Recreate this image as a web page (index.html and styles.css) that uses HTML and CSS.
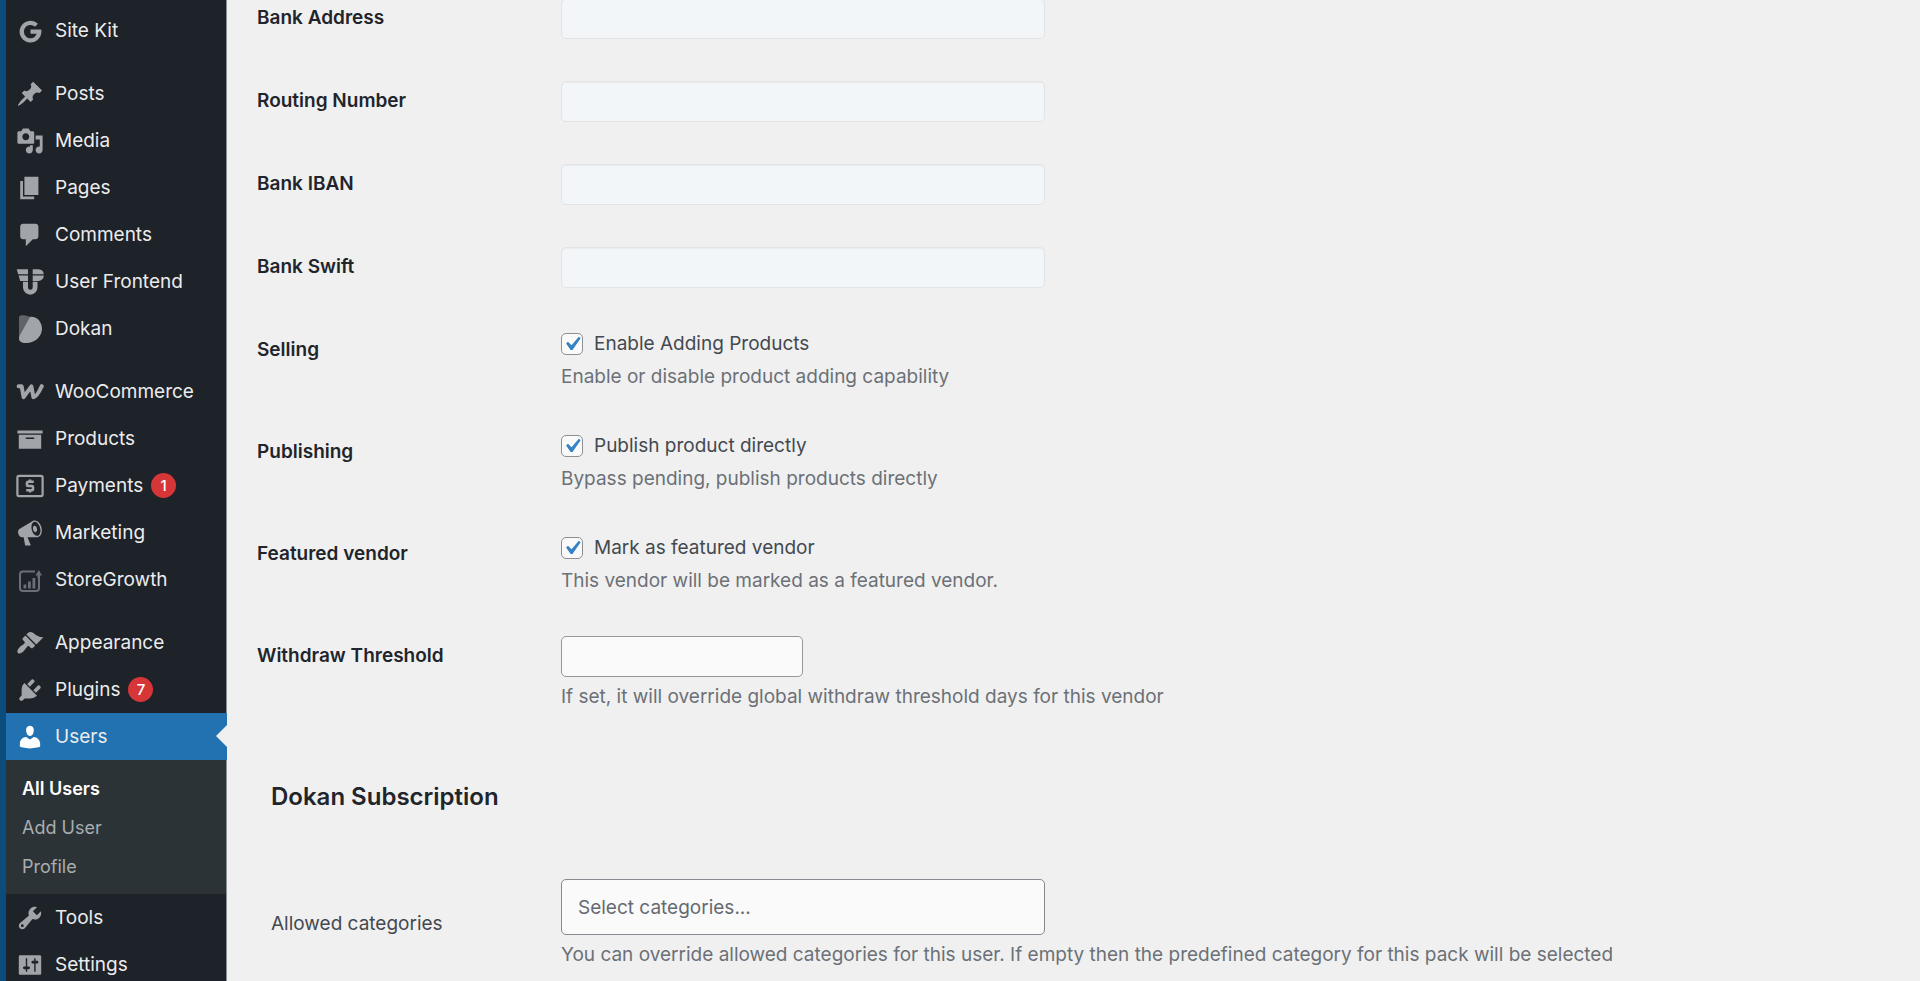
FILE: index.html
```html
<!DOCTYPE html>
<html lang="en">
<head>
<meta charset="utf-8">
<title>Edit User</title>
<link rel="stylesheet" href="styles.css">
</head>
<body>
<div class="layout">
  <nav class="sidebar" aria-label="Main menu">
    <ul class="menu">
      <li><a class="item" href="#"><svg class="icon" viewBox="0 0 28 28"><path d="M20.500 8.200A8.800 8.800 0 1 0 23.300 14.600H14.500" fill="none" stroke="currentColor" stroke-width="4.200"/></svg>Site Kit</a></li>
    </ul>
    <ul class="menu">
      <li><a class="item" href="#"><svg class="icon" viewBox="0 0 20 20"><path d="M10.44 3.02l1.82-1.82 6.36 6.35-1.83 1.82c-1.05-.68-2.48-.57-3.41.36l-.75.75c-.92.93-1.04 2.35-.35 3.41l-1.83 1.82-2.41-2.41-2.8 2.79c-.42.42-3.38 2.71-3.8 2.29s1.86-3.39 2.28-3.81l2.79-2.79L4.1 9.36l1.83-1.82c1.05.69 2.48.57 3.4-.36l.75-.75c.93-.92 1.05-2.35.36-3.41z"/></svg>Posts</a></li>
      <li><a class="item" href="#"><svg class="icon" viewBox="0 0 20 20"><path d="M13 11V4c0-.55-.45-1-1-1h-1.67L9 1H5L3.67 3H2c-.55 0-1 .45-1 1v7c0 .55.45 1 1 1h10c.55 0 1-.45 1-1zM7 4.5c1.38 0 2.5 1.12 2.5 2.5S8.38 9.5 7 9.5 4.5 8.38 4.5 7 5.62 4.5 7 4.5zM14 6h5v10.5c0 1.38-1.12 2.5-2.5 2.5S14 17.88 14 16.5s1.12-2.5 2.5-2.5c.17 0 .34.02.5.05V9h-3V6zm-4 8.05V13h2v3.5c0 1.38-1.12 2.5-2.5 2.5S7 17.88 7 16.5 8.12 14 9.5 14c.17 0 .34.02.5.05z"/></svg>Media</a></li>
      <li><a class="item" href="#"><svg class="icon" viewBox="0 0 20 20"><path d="M6 15V2h10v13H6zm-1 1h8v2H3V5h2v11z"/></svg>Pages</a></li>
      <li><a class="item" href="#"><svg class="icon" viewBox="0 0 20 20"><path d="M5 2h9c1.1 0 2 .9 2 2v7c0 1.1-.9 2-2 2h-2l-5 5v-5H5c-1.1 0-2-.9-2-2V4c0-1.1.9-2 2-2z"/></svg>Comments</a></li>
      <li><a class="item" href="#"><svg class="icon" viewBox="0 0 28 28"><path d="M.7 1.3H12V6.200H2.200zM2.600 7.400H12V13H4.200zM7 13.800H12V19.500a2.300 2.300 0 0 0 4.700 0V13.800h4.800V19.500a7.200 7.200 0 0 1-14.500 0zM16.700 1.300H22.500a5.600 5.600 0 0 1 5.300 4.900H16.700zM16.700 7.400H27.800a5.600 5.600 0 0 1-5.300 5.600H16.700z"/></svg>User Frontend</a></li>
      <li><a class="item" href="#"><svg class="icon" viewBox="0 0 28 28"><path opacity=".5" d="M3 23V2C2.500-.2 9.500-.6 14 2L3 23z"/><path d="M14 1.800C21 1 26 7 26 13.600C26 22 18.500 28.500 9.500 28C5.500 27.900 3 26.500 3 23.500C3 22 3.600 20.700 4.300 19.500z"/></svg>Dokan</a></li>
    </ul>
    <ul class="menu">
      <li><a class="item" href="#"><svg class="icon" viewBox="0 0 28 28"><path d="M2.600 8.200H5.600L7.600 19.200L15.400 8.400L17.400 19.200Q20.500 19.500 25.800 8.200" fill="none" stroke="currentColor" stroke-width="4" stroke-linecap="round" stroke-linejoin="round"/></svg>WooCommerce</a></li>
      <li><a class="item" href="#"><svg class="icon" viewBox="0 0 20 20"><path d="M19 4v2H1V4h18zM2 7h16v10H2V7zm11 3V9H7v1h6z"/></svg>Products</a></li>
      <li><a class="item" href="#"><svg class="icon" viewBox="0 0 28 28"><rect x="1.400" y="3.900" width="25.200" height="20.200" rx="1.500" fill="none" stroke="currentColor" stroke-width="2.200"/><path d="M17.800 9.800H12.200A1.200 1.200 0 0 0 11 11V12.800A1.200 1.200 0 0 0 12.200 14H15.800A1.200 1.200 0 0 1 17 15.200V17A1.200 1.200 0 0 1 15.800 18.200H10.200M14 7.500V10M14 18V20.500" fill="none" stroke="currentColor" stroke-width="2.600"/></svg>Payments<span class="badge">1</span></a></li>
      <li><a class="item" href="#"><svg class="icon" viewBox="0 0 20 20"><path d="M18.150 5.940c.46 1.620.38 3.220-.02 4.480-.42 1.280-1.260 2.180-2.300 2.480-.16.06-.26.06-.4.06-.06.02-.12.02-.18.02-.06.02-.14.02-.22.02h-6.800l2.220 5.500c.02.14-.06.26-.14.34-.08.1-.24.16-.34.16H6.950c-.1 0-.26-.06-.34-.16-.08-.08-.16-.2-.14-.34l-1-5.500H4.250l-.02-.02c-.5.06-1.080-.18-1.540-.62s-.88-1.080-1.060-1.880c-.24-.8-.2-1.560-.02-2.200.18-.62.58-1.080 1.060-1.300l.02-.02 9-5.400c.1-.06.18-.1.24-.16.06-.04.14-.08.24-.12.16-.08.28-.12.5-.18 1.040-.3 2.240.1 3.220.98s1.840 2.240 2.260 3.860zm-2.580 5.980h-.02c.4-.1.74-.34 1.040-.7.58-.7.86-1.760.86-3.040 0-.64-.1-1.300-.28-1.980-.34-1.360-1.020-2.500-1.780-3.240s-1.680-1.100-2.460-.88c-.82.22-1.400.96-1.700 2-.32 1.040-.28 2.360.06 3.720.38 1.360 1 2.500 1.800 3.240.78.74 1.620 1.100 2.480.88zm-2.540-7.080c.22-.04.42-.02.62.04.38.16.76.48 1.020 1s.42 1.200.42 1.780c0 .3-.04.56-.12.8-.18.48-.44.84-.86.94-.34.1-.8-.06-1.140-.4s-.64-.86-.78-1.500c-.18-.62-.12-1.240.02-1.720s.48-.84.82-.94z"/></svg>Marketing</a></li>
      <li><a class="item" href="#"><svg class="icon icon-dim" viewBox="0 0 28 28"><path d="M19 5.500H7A3 3 0 0 0 4 8.500V22A3 3 0 0 0 7 25H20A3 3 0 0 0 23 22V12" fill="none" stroke="currentColor" stroke-width="2"/><path d="M7.500 18.500h2.800v4H7.500zM12 15.500h2.800v7H12zM16.500 12h2.800v10.500h-2.800zM21.500 12V9.500H19.500L22.800 4L26 9.500H24V12z"/></svg>StoreGrowth</a></li>
    </ul>
    <ul class="menu">
      <li><a class="item" href="#"><svg class="icon" viewBox="0 0 20 20"><path d="M14.480 11.060L7.410 3.990l1.500-1.500c.5-.56 2.300-.47 3.510.32 1.210.8 1.430 1.280 2.910 2.100 1.180.64 2.450 1.260 4.450.85zm-.71.71L6.700 4.700 4.930 6.470c-.39.39-.39 1.020 0 1.410l1.060 1.060c.39.39.39 1.030 0 1.420-.6.6-1.430 1.110-2.210 1.690-.35.26-.7.53-1.010.84C1.430 14.230.4 16.080 1.400 17.070c.99 1 2.840-.03 4.180-1.360.31-.31.58-.66.85-1.020.57-.78 1.080-1.610 1.690-2.210.39-.39 1.020-.39 1.410 0l1.060 1.060c.39.39 1.020.39 1.410 0z"/></svg>Appearance</a></li>
      <li><a class="item" href="#"><svg class="icon" viewBox="0 0 20 20"><path d="M13.110 4.360L9.870 7.600 8 5.730l3.240-3.240c.35-.34 1.050-.2 1.560.32.52.51.66 1.210.31 1.550zm-8 1.770l.91-1.120 9.010 9.010-1.190.84c-.71.71-2.630 1.160-3.820 1.160H6.140L4.900 17.260c-.59.59-1.540.59-2.120 0-.59-.58-.59-1.530 0-2.120l1.240-1.240v-3.880c0-1.130.4-3.190 1.090-3.890zm7.260 3.970l3.240-3.240c.34-.35 1.040-.21 1.550.31.52.51.66 1.210.31 1.550l-3.240 3.250z"/></svg>Plugins<span class="badge">7</span></a></li>
      <li>
        <a class="item current" href="#" aria-current="true"><svg class="icon" viewBox="0 0 20 20"><path d="M10 9.250c-2.270 0-2.730-3.440-2.730-3.440C7 4.020 7.820 2 9.970 2c2.160 0 2.980 2.020 2.710 3.810 0 0-.41 3.440-2.680 3.440zm0 2.570L12.720 10c2.390 0 4.520 2.330 4.520 4.530v2.490s-3.650 1.130-7.240 1.130c-3.650 0-7.240-1.130-7.240-1.130v-2.490c0-2.250 1.940-4.480 4.470-4.480z"/></svg>Users</a>
        <ul class="submenu">
          <li><a class="subitem active" href="#">All Users</a></li>
          <li><a class="subitem" href="#">Add User</a></li>
          <li><a class="subitem" href="#">Profile</a></li>
        </ul>
      </li>
      <li><a class="item" href="#"><svg class="icon" viewBox="0 0 20 20"><path d="M16.680 9.770c-1.340 1.340-3.300 1.670-4.950.99l-5.410 6.520c-.99.99-2.590.99-3.580 0s-.99-2.590 0-3.570l6.520-5.420c-.68-1.650-.35-3.610.99-4.950 1.280-1.280 3.120-1.620 4.720-1.060l-2.890 2.890 2.820 2.820 2.860-2.870c.53 1.580.18 3.390-1.080 4.650zM3.810 16.210c.4.39 1.040.39 1.430 0 .4-.4.4-1.040 0-1.430-.39-.4-1.030-.4-1.430 0-.39.39-.39 1.030 0 1.430z"/></svg>Tools</a></li>
      <li><a class="item" href="#"><svg class="icon" viewBox="0 0 20 20"><path d="M18 16V4c0-.55-.45-1-1-1H3c-.55 0-1 .45-1 1v12c0 .55.45 1 1 1h14c.55 0 1-.45 1-1zM8 11h1c.55 0 1 .45 1 1s-.45 1-1 1H8v1.500c0 .28-.22.5-.5.5s-.5-.22-.5-.5V13H6c-.55 0-1-.45-1-1s.45-1 1-1h1V5.500c0-.28.22-.5.5-.5s.5.22.5.5V11zm5-2h-1c-.55 0-1-.45-1-1s.45-1 1-1h1V5.500c0-.28.22-.5.5-.5s.5.22.5.5V7h1c.55 0 1 .45 1 1s-.45 1-1 1h-1v5.500c0 .28-.22.5-.5.5s-.5-.22-.5-.5V9z"/></svg>Settings</a></li>
    </ul>
  </nav>

  <main class="content">
    <form>
      <div class="row">
        <label class="label" for="bank-address">Bank Address</label>
        <div class="field"><input class="text" type="text" id="bank-address" disabled></div>
      </div>
      <div class="row">
        <label class="label" for="routing">Routing Number</label>
        <div class="field"><input class="text" type="text" id="routing" disabled></div>
      </div>
      <div class="row">
        <label class="label" for="iban">Bank IBAN</label>
        <div class="field"><input class="text" type="text" id="iban" disabled></div>
      </div>
      <div class="row">
        <label class="label" for="swift">Bank Swift</label>
        <div class="field"><input class="text" type="text" id="swift" disabled></div>
      </div>
      <div class="row">
        <div class="label">Selling</div>
        <div class="field">
          <label class="check"><input type="checkbox" checked>Enable Adding Products</label>
          <p class="hint">Enable or disable product adding capability</p>
        </div>
      </div>
      <div class="row">
        <div class="label">Publishing</div>
        <div class="field">
          <label class="check"><input type="checkbox" checked>Publish product directly</label>
          <p class="hint">Bypass pending, publish products directly</p>
        </div>
      </div>
      <div class="row">
        <div class="label">Featured vendor</div>
        <div class="field">
          <label class="check"><input type="checkbox" checked>Mark as featured vendor</label>
          <p class="hint">This vendor will be marked as a featured vendor.</p>
        </div>
      </div>
      <div class="row">
        <label class="label" for="threshold">Withdraw Threshold</label>
        <div class="field">
          <input class="text small" type="text" id="threshold">
          <p class="hint">If set, it will override global withdraw threshold days for this vendor</p>
        </div>
      </div>

      <section class="subscription">
        <h3 class="heading">Dokan Subscription</h3>
        <div class="category-row">
          <label class="category-label" for="categories">Allowed categories</label>
          <div>
            <input class="text categories" type="text" id="categories" placeholder="Select categories...">
            <p class="hint">You can override allowed categories for this user. If empty then the predefined category for this pack will be selected</p>
          </div>
        </div>
      </section>
    </form>
  </main>
</div>
</body>
</html>
```
FILE: styles.css
```css
* {
  box-sizing: border-box;
}

body {
  margin: 0;
  height: 100vh;
  overflow: hidden;
  background: #f0f0f0;
  color: #44494f;
  font-family: Inter, "Liberation Sans", sans-serif;
  font-size: 19px;
  line-height: 26px;
}

.layout {
  display: flex;
  min-height: 100vh;
}

/* Sidebar */
.sidebar {
  flex: 0 0 227px;
  padding-top: 7px;
  background: #1e2229;
  border-left: 6px solid #0c4c7c;
  border-right: 1px solid #8c8f92;
}

.menu,
.submenu {
  margin: 0;
  padding: 0;
  list-style: none;
}

.menu + .menu {
  margin-top: 16px;
}

.item {
  position: relative;
  display: flex;
  align-items: center;
  height: 47px;
  padding-left: 10px;
  color: #ececed;
  text-decoration: none;
}

.icon {
  width: 28px;
  height: 28px;
  margin-right: 11px;
  color: #a1a5aa;
  fill: currentColor;
}

.icon-dim {
  color: #6b6f75;
}

.badge {
  width: 25px;
  height: 25px;
  margin-left: 8px;
  border-radius: 50%;
  background: #d63638;
  color: #fff;
  font-size: 15px;
  font-weight: 500;
  line-height: 25px;
  text-align: center;
}

.current {
  margin-right: -1px;
  background: #2271b1;
}

.current .icon {
  color: #fff;
}

.current::after {
  content: "";
  position: absolute;
  top: 12px;
  right: 0;
  border: 11px solid transparent;
  border-right-color: #f0f0f0;
  border-left-width: 0;
}

.submenu {
  padding: 9px 0 8px;
  background: #2c3337;
}

.subitem {
  display: block;
  padding-left: 16px;
  color: #a9adb0;
  font-size: 18px;
  line-height: 39px;
  text-decoration: none;
}

.subitem.active {
  color: #fff;
  font-weight: 600;
}

/* Profile form */
.content {
  flex: 1;
  margin-top: -22px;
  padding-left: 30px;
}

.row {
  display: grid;
  grid-template-columns: 304px 1fr;
}

.label {
  padding-top: 27px;
  color: #1f252b;
  font-weight: 600;
}

.field {
  padding: 20px 0 22px;
}

.text {
  display: block;
  width: 484px;
  max-width: 100%;
  height: 41px;
  padding: 0 16px;
  border: 1px solid #94979b;
  border-radius: 5px;
  background: #fafafa;
  color: #44494f;
  font: inherit;
}

.text:disabled {
  border-color: #e2e3e4;
  background: #f3f6f9;
  box-shadow: inset 0 1px 1px #eaebec;
}

.text.small {
  width: 242px;
}

.text.categories {
  height: 56px;
  border-color: #858a90;
}

.text::placeholder {
  color: #656a71;
  opacity: 1;
}

.check {
  display: flex;
  align-items: center;
  gap: 11px;
  width: fit-content;
  min-height: 28px;
}

.check input {
  appearance: none;
  width: 22px;
  height: 22px;
  margin: 0;
  border: 1px solid #8c8f94;
  border-radius: 5px;
  background: #fafafa;
}

.check input:checked {
  background: #fafafa url("data:image/svg+xml,%3Csvg xmlns='http://www.w3.org/2000/svg' viewBox='0 0 20 20'%3E%3Cpath d='M14.830 4.890l1.340.94-5.810 8.380H9.020L5.780 9.670l1.340-1.250 2.570 2.400z' fill='%233582c4'/%3E%3C/svg%3E") center / 28px 28px no-repeat;
}

.hint {
  margin: 7px 0 0;
  color: #6c7077;
}

.check + .hint {
  margin-top: 6px;
}

.subscription {
  padding: 48px 0 0 14px;
}

.heading {
  margin: 0;
  color: #1f252b;
  font-size: 24px;
  font-weight: 600;
  line-height: 34px;
}

.category-row {
  display: grid;
  grid-template-columns: 290px 1fr;
  align-items: center;
  margin-top: 65px;
}
```
